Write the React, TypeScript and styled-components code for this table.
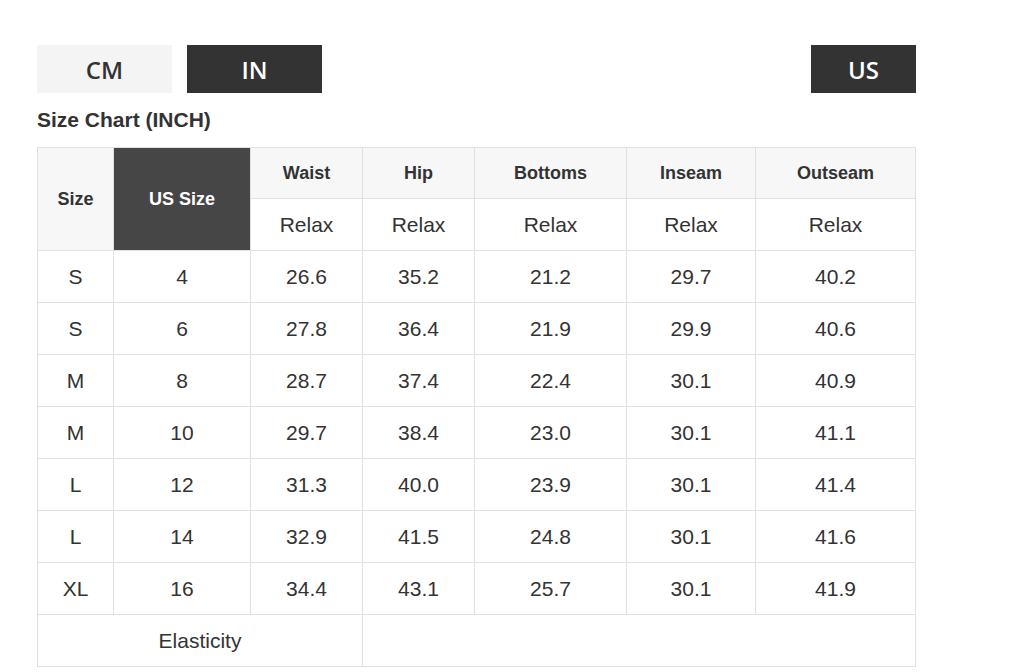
import React from "react";
import styled, { createGlobalStyle } from "styled-components";

const Global = createGlobalStyle`
  html, body { margin: 0; padding: 0; background: #fff; }
  body { font-family: "Liberation Sans", Arial, sans-serif; color: #333; }
`;

const Page = styled.div`
  padding: 45px 0 0 37px;
  width: 879px;
`;

const Toolbar = styled.div`
  display: flex;
  align-items: center;
  gap: 15px;
  height: 48px;
`;

const UnitButton = styled.button<{ $active?: boolean; $w: number }>`
  width: ${(p) => p.$w}px;
  height: 48px;
  border: none;
  margin: 0;
  padding: 0;
  display: flex;
  align-items: center;
  justify-content: center;
  font-family: "Open Sans", sans-serif;
  font-weight: 600;
  font-size: 24px;
  background: ${(p) => (p.$active ? "#333" : "#f4f4f4")};
  color: ${(p) => (p.$active ? "#fff" : "#333")};
  cursor: pointer;
`;

const Spacer = styled.div`
  flex: 1;
`;

const Title = styled.h2`
  margin: 0;
  padding-top: 15px;
  height: 39px;
  font-size: 21px;
  font-weight: 700;
  line-height: 24px;
  color: #333;
`;

const Table = styled.table`
  border-collapse: collapse;
  table-layout: fixed;
  width: 878px;
  color: #333;
`;

const Th = styled.th<{ $dark?: boolean }>`
  border: 1px solid #e0e0e0;
  background: ${(p) => (p.$dark ? "#464646" : "#f7f7f7")};
  color: ${(p) => (p.$dark ? "#fff" : "#333")};
  font-size: 18px;
  font-weight: 700;
  height: 50px;
  padding: 0;
  text-align: center;
  vertical-align: middle;
`;

const SubTh = styled.td`
  border: 1px solid #e0e0e0;
  font-size: 21px;
  height: 51px;
  padding: 0;
  text-align: center;
  vertical-align: middle;
`;

const Td = styled.td`
  border: 1px solid #e0e0e0;
  font-size: 21px;
  height: 51px;
  padding: 0;
  text-align: center;
  vertical-align: middle;
`;

const cols = [76, 137, 112, 112, 152, 129, 160];
const measures = ["Waist", "Hip", "Bottoms", "Inseam", "Outseam"];
const rows: string[][] = [
  ["S", "4", "26.6", "35.2", "21.2", "29.7", "40.2"],
  ["S", "6", "27.8", "36.4", "21.9", "29.9", "40.6"],
  ["M", "8", "28.7", "37.4", "22.4", "30.1", "40.9"],
  ["M", "10", "29.7", "38.4", "23.0", "30.1", "41.1"],
  ["L", "12", "31.3", "40.0", "23.9", "30.1", "41.4"],
  ["L", "14", "32.9", "41.5", "24.8", "30.1", "41.6"],
  ["XL", "16", "34.4", "43.1", "25.7", "30.1", "41.9"],
];

export default function App() {
  return (
    <>
      <Global />
      <Page>
        <Toolbar>
          <UnitButton $w={135}>CM</UnitButton>
          <UnitButton $w={135} $active>IN</UnitButton>
          <Spacer />
          <UnitButton $w={105} $active>US</UnitButton>
        </Toolbar>
        <Title>Size Chart (INCH)</Title>
        <Table>
          <colgroup>
            {cols.map((w, i) => (
              <col key={i} style={{ width: w }} />
            ))}
          </colgroup>
          <thead>
            <tr>
              <Th rowSpan={2}>Size</Th>
              <Th rowSpan={2} $dark>US Size</Th>
              {measures.map((m) => (
                <Th key={m}>{m}</Th>
              ))}
            </tr>
            <tr>
              {measures.map((m) => (
                <SubTh key={m}>Relax</SubTh>
              ))}
            </tr>
          </thead>
          <tbody>
            {rows.map((r, i) => (
              <tr key={i}>
                {r.map((c, j) => (
                  <Td key={j}>{c}</Td>
                ))}
              </tr>
            ))}
            <tr>
              <Td colSpan={3}>Elasticity</Td>
              <Td colSpan={4}></Td>
            </tr>
          </tbody>
        </Table>
      </Page>
    </>
  );
}
